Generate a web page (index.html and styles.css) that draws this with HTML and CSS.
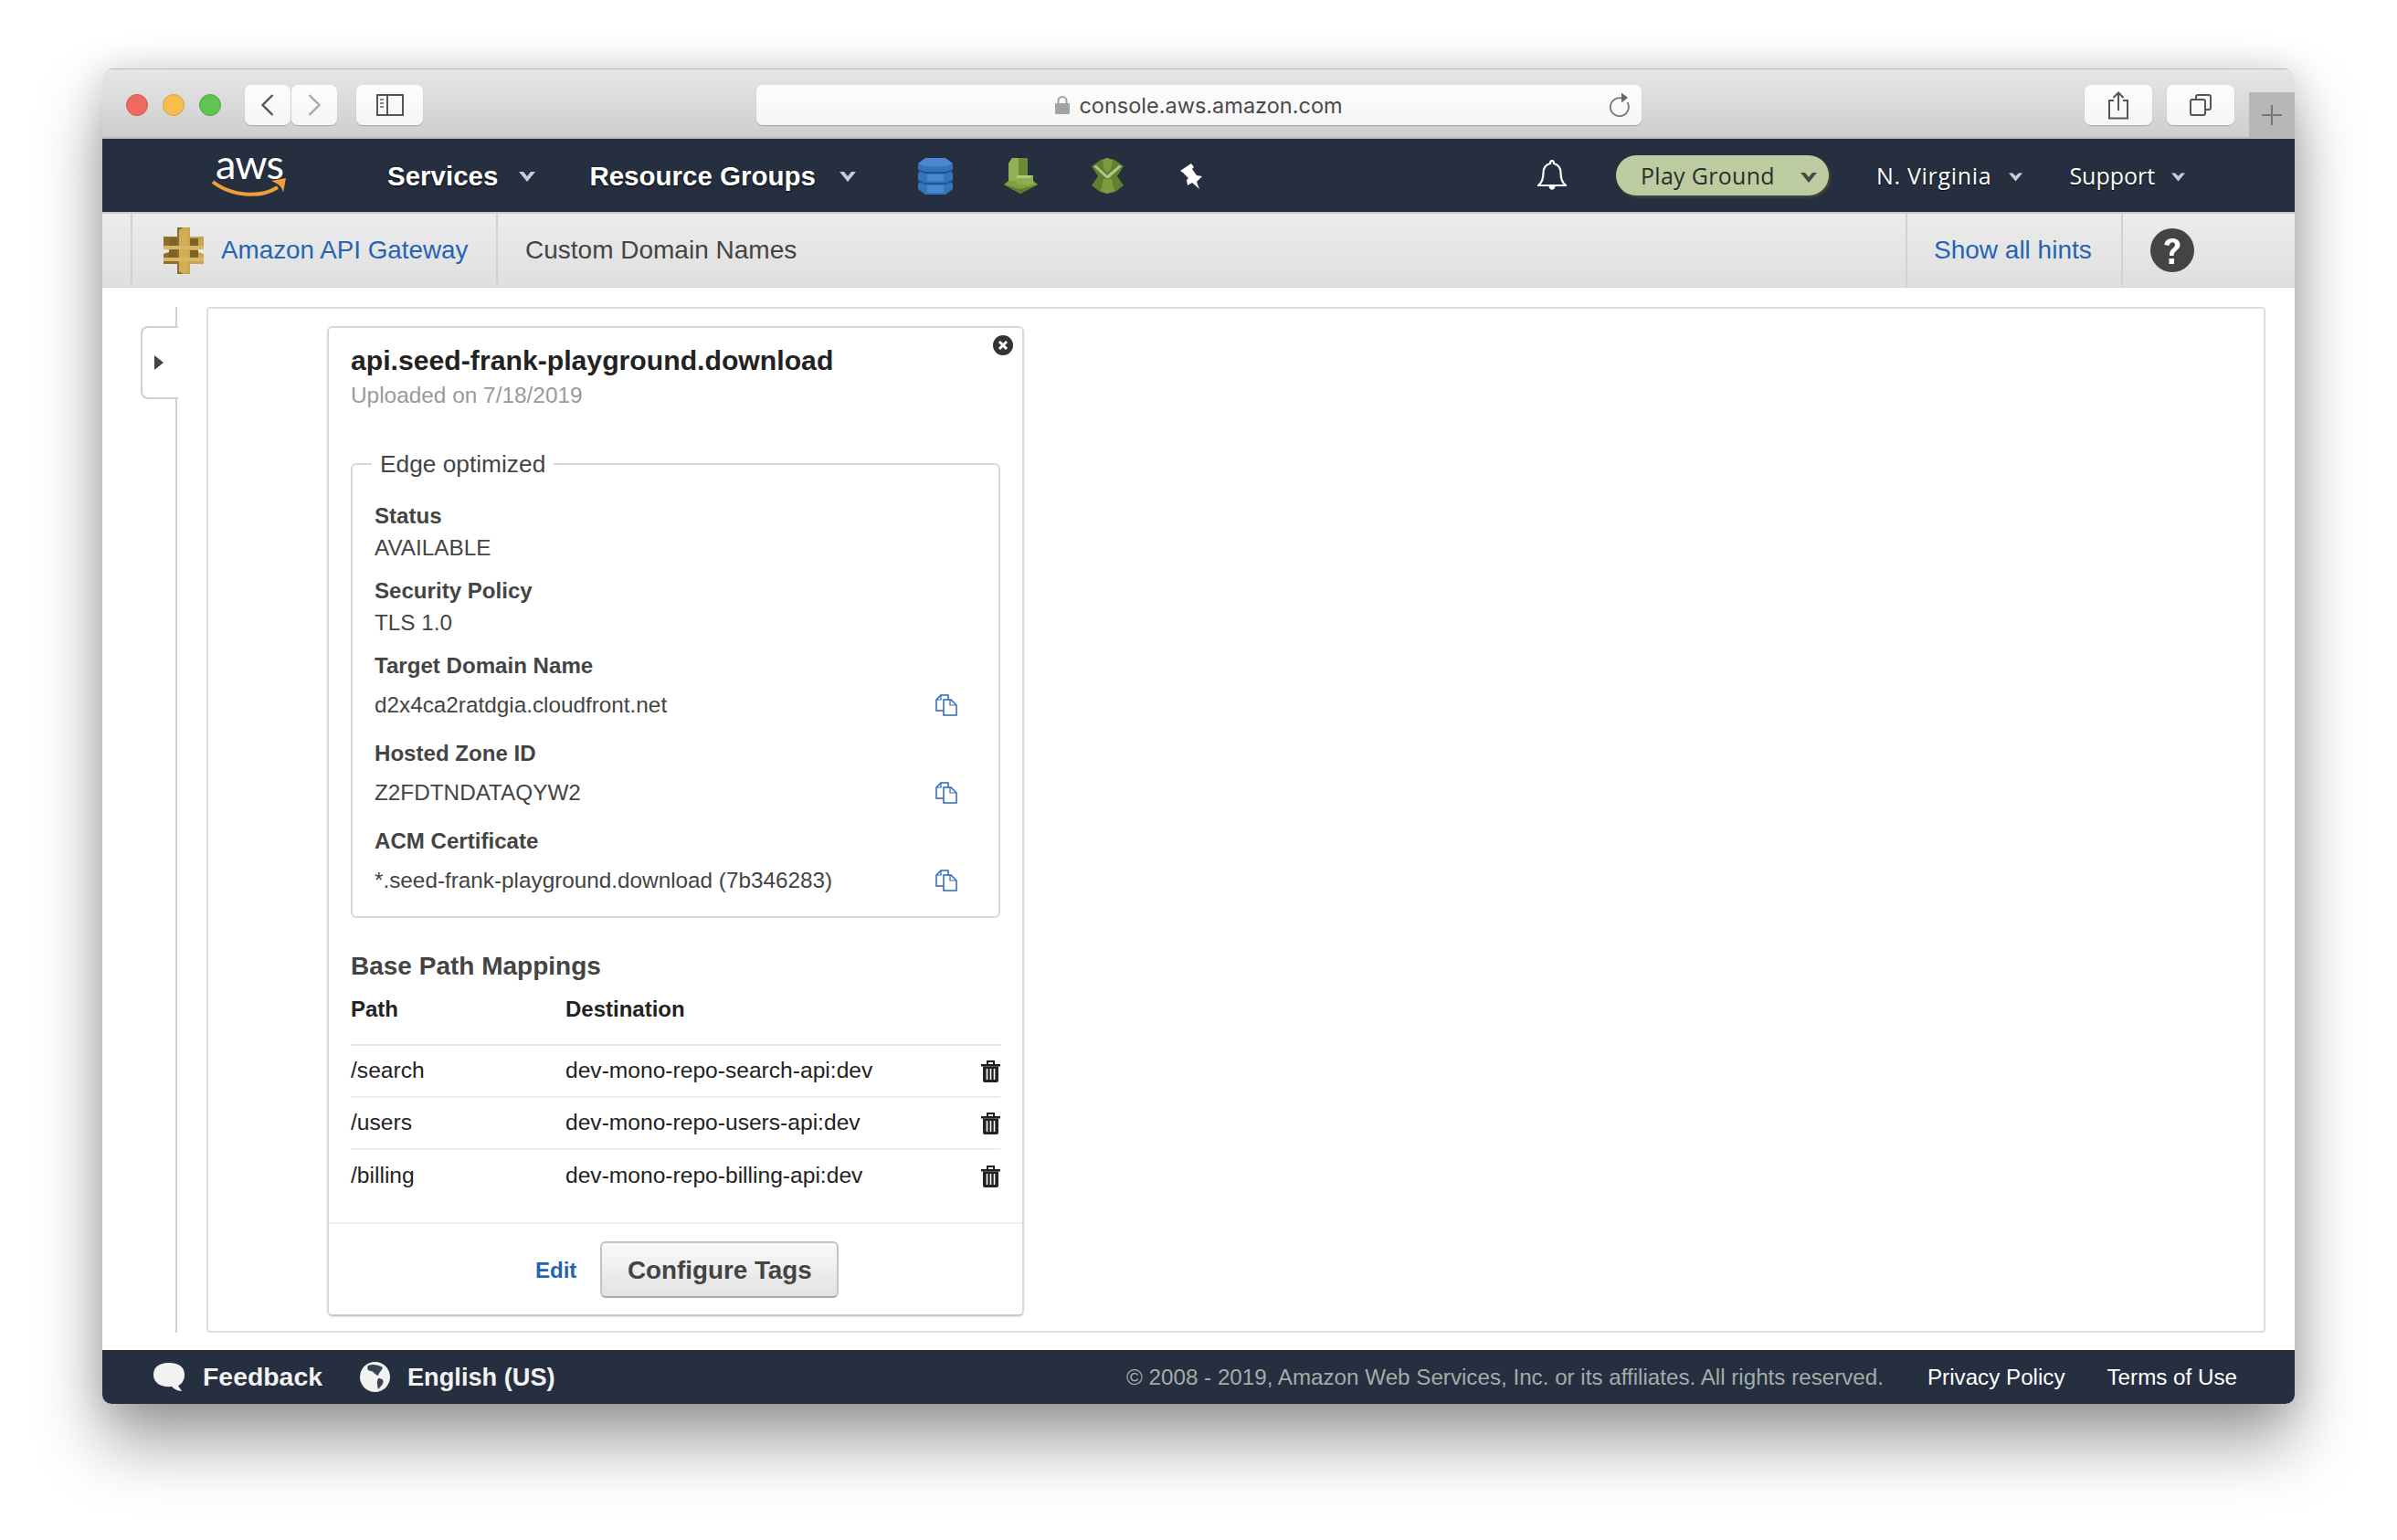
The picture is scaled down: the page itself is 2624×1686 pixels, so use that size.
FILE: index.html
```html
<!DOCTYPE html>
<html lang="en">
<head>
  <meta charset="UTF-8" />
  <title>Custom Domain Names - Amazon API Gateway</title>
  <link rel="stylesheet" href="styles.css">
</head>
<body>
<div class="window">

  <!-- safari toolbar -->
  <div class="toolbar">
    <span class="light red"></span>
    <span class="light yellow"></span>
    <span class="light green"></span>
    <div class="tbtn back">
      <svg width="14" height="24" viewBox="0 0 14 24"><path d="M12.5 1 L1.5 12 L12.5 23" fill="none" stroke="#555" stroke-width="2.4"/></svg>
    </div>
    <div class="tbtn forward">
      <svg width="14" height="24" viewBox="0 0 14 24"><path d="M1.5 1 L12.5 12 L1.5 23" fill="none" stroke="#a8a8a8" stroke-width="2.4"/></svg>
    </div>
    <div class="tbtn side">
      <svg width="30" height="24" viewBox="0 0 30 24"><rect x="1" y="1" width="28" height="22" fill="none" stroke="#555" stroke-width="2"/><path d="M12 1 V23" stroke="#555" stroke-width="2"/><path d="M4 6 H8 M4 10 H8 M4 14 H8" stroke="#888" stroke-width="2"/></svg>
    </div>
    <div class="url">
      <svg class="lock" width="16" height="20" viewBox="0 0 16 20"><rect x="0" y="8" width="16" height="12" rx="1" fill="#a3a3a3"/><path d="M3.5 9 V5.5 a4.5 4.5 0 0 1 9 0 V9" fill="none" stroke="#a3a3a3" stroke-width="2"/></svg>
      <span class="url-text">console.aws.amazon.com</span>
      <svg class="reload" width="24" height="27" viewBox="0 0 24 27"><path d="M15 6.6 A10 10 0 1 0 20.5 11" fill="none" stroke="#777" stroke-width="1.8"/><path d="M14 0.5 L21 6 L14 11.5 Z" fill="#666"/></svg>
    </div>
    <div class="tbtn wide share-btn">
      <svg width="24" height="31" viewBox="0 0 24 31"><path d="M7 10 H2 V29.5 H22 V10 H17" fill="none" stroke="#555" stroke-width="2"/><path d="M12 21 V2 M6.5 7 L12 1.5 L17.5 7" fill="none" stroke="#555" stroke-width="2"/></svg>
    </div>
    <div class="tbtn wide tabs-btn">
      <svg width="24" height="24" viewBox="0 0 24 24"><rect x="1" y="6" width="16" height="17" rx="2" fill="none" stroke="#555" stroke-width="2"/><path d="M7 5 V3 a2 2 0 0 1 2 -2 H21 a2 2 0 0 1 2 2 V15 a2 2 0 0 1 -2 2 H18" fill="none" stroke="#555" stroke-width="2"/></svg>
    </div>
    <div class="newtab">
      <svg width="22" height="22" viewBox="0 0 22 22"><path d="M11 0 V22 M0 11 H22" stroke="#777" stroke-width="2"/></svg>
    </div>
  </div>

  <!-- aws nav -->
  <nav class="nav">
    <a class="logo">
      <span class="logo-text">aws</span>
      <svg class="smile" width="82" height="22" viewBox="0 0 82 22"><path d="M1 4 C20 19 52 23 72 10" fill="none" stroke="#f29d38" stroke-width="4"/><path d="M65 3 L81 0 L78 16 C77 9 72 6 65 3 Z" fill="#f29d38"/></svg>
    </a>
    <a class="nav-main services">Services</a>
    <svg class="caret caret-services" width="18" height="11" viewBox="0 0 18 11"><path d="M0 0 H5 L9 5 L13 0 H18 L9 11 Z" fill="#ccc"/></svg>
    <a class="nav-main groups">Resource Groups</a>
    <svg class="caret caret-groups" width="18" height="11" viewBox="0 0 18 11"><path d="M0 0 H5 L9 5 L13 0 H18 L9 11 Z" fill="#ccc"/></svg>

    <svg class="shortcut first" width="38" height="40" viewBox="0 0 38 40">
      <path d="M8 0 H30 L38 6 V12 L35 14 L38 16 V24 L35 26 L38 28 V34 L30 40 H8 L0 34 V28 L3 26 L0 24 V16 L3 14 L0 12 V6 Z" fill="#3574bd"/>
      <path d="M0 12 L8 15 H30 L38 12 V14 L30 17 H8 L0 14 Z M0 24 L8 27 H30 L38 24 V26 L30 29 H8 L0 26 Z" fill="#245391"/>
      <path d="M8 0 H30 L38 6 L30 9 H8 L0 6 Z M10 18 H28 V25 H10 Z M10 30 H28 V38 H10 Z" fill="#4a87cf"/>
    </svg>
    <svg class="shortcut second" width="37" height="39" viewBox="0 0 37 39">
      <path d="M0 29 L5 25 H32 L37 29 L18 39 Z" fill="#80a042"/>
      <path d="M5 6 L9 0 H26 V24 H5 Z" fill="#6c8b35"/>
      <path d="M5 6 L9 0 H16 V25 H5 Z" fill="#93b153"/>
      <path d="M14 19 H32 V29 H14 Z" fill="#8ead4e"/>
      <path d="M14 19 H32 L28 22 H14 Z" fill="#b0c97a"/>
      <path d="M0 29 L18 34 L37 29 L18 39 Z" fill="#5f7d2e"/>
    </svg>
    <svg class="shortcut third" width="35" height="39" viewBox="0 0 35 39">
      <path d="M10 2 L17 0 L25 2 L35 9 L28 20 L35 30 L26 37 L17 39 L9 37 L0 30 L7 20 L0 9 Z" fill="#627f30"/>
      <path d="M12 2 L17 0 L23 2 L21 13 L17 16 L14 13 Z" fill="#7c9b40"/>
      <path d="M13 23 H22 L25 36 L17 39 L10 36 Z" fill="#7c9b40"/>
      <path d="M2 9 L5 8 L17 19 L30 8 L33 9 L19 22 H16 Z" fill="#b4c590"/>
    </svg>
    <svg class="shortcut fourth" width="25" height="28" viewBox="0 0 25 28">
      <path d="M0 8 L12 0 L15 4 L13 6 L18 13 L24 14 L18 20 L21 28 L13 21 L8 24 L7 18 L9 16 L3 10 Z" fill="#fff"/>
    </svg>

    <svg class="bell" width="32" height="35" viewBox="0 0 32 35"><path d="M16 1 C17.500 1 18 2.500 18 4 C23 5.500 25.500 9 25.500 14 C25.500 21 27 25 31 28 H1 C5 25 6.500 21 6.500 14 C6.500 9 9 5.500 14 4 C14 2.500 14.500 1 16 1 Z" fill="none" stroke="#fff" stroke-width="2.2"/><path d="M12.500 29 C13 34 19 34 19.500 29 Z" fill="#fff"/></svg>

    <div class="env">
      <span class="env-name">Play Ground</span>
      <svg width="18" height="11" viewBox="0 0 18 11"><path d="M0 0 H5 L9 5 L13 0 H18 L9 11 Z" fill="#454a3c"/></svg>
    </div>
    <a class="nav-light region">N. Virginia</a>
    <svg class="caret caret-region" width="15" height="10" viewBox="0 0 18 11"><path d="M0 0 H5 L9 4 L13 0 H18 L9 11 Z" fill="#ccc"/></svg>
    <a class="nav-light support">Support</a>
    <svg class="caret caret-support" width="15" height="10" viewBox="0 0 18 11"><path d="M0 0 H5 L9 4 L13 0 H18 L9 11 Z" fill="#ccc"/></svg>
  </nav>

  <!-- service bar -->
  <div class="subbar">
    <div class="service">
      <svg width="44" height="51" viewBox="0 0 44 51">
        <path d="M0 10 H15 V0 L22 0 L22 51 L15 51 V40 H0 V29 L6 27 V23 L0 21 Z" fill="#8d6f2e"/>
        <path d="M44 10 H29 V0 L22 0 V51 L29 51 V40 H44 V29 L38 27 V23 L44 21 Z" fill="#c9a552"/>
        <path d="M17 3 L22 0 L27 3 V48 L22 51 L17 48 Z" fill="#d2ad58"/>
        <path d="M0 20 H44 V24 H0 Z M0 33 H44 V37 H0 Z" fill="#d8b664"/>
        <path d="M6 12 H15 V20 H6 Z M6 25 H15 V33 H6 Z M29 12 H38 V20 H29 Z M29 25 H38 V33 H29 Z" fill="#7d6226"/>
      </svg>
      <a class="link service-name">Amazon API Gateway</a>
    </div>
    <div class="crumb">Custom Domain Names</div>
    <a class="link hints">Show all hints</a>
    <div class="help">
      <svg width="48" height="48" viewBox="0 0 48 48"><circle cx="24" cy="24" r="24" fill="#444"/><path d="M15.500 18 C15.500 9 32.500 8.500 32.500 18 C32.500 24 25.500 24 25.500 30 H21 C20.500 22 27 22 27 18 C27 14 21 14.500 20.500 19 Z" fill="#fff"/><rect x="20.500" y="33" width="5.500" height="6" fill="#fff"/></svg>
    </div>
  </div>

  <!-- main -->
  <div class="content">
    <div class="sidebar">
      <div class="side-tab"><span class="side-arrow"></span></div>
    </div>
    <div class="panel">
      <div class="card">
        <svg class="close" width="22" height="22" viewBox="0 0 22 22"><circle cx="11" cy="11" r="11" fill="#333"/><path d="M7 7 L15 15 M15 7 L7 15" stroke="#fff" stroke-width="3"/></svg>
        <h2 class="domain">api.seed-frank-playground.download</h2>
        <div class="uploaded">Uploaded on 7/18/2019</div>

        <fieldset class="edge">
          <legend>Edge optimized</legend>
          <div class="field">
            <div class="label">Status</div>
            <div class="value">AVAILABLE</div>
          </div>
          <div class="field">
            <div class="label">Security Policy</div>
            <div class="value">TLS 1.0</div>
          </div>
          <div class="field">
            <div class="label">Target Domain Name</div>
            <div class="value copyable">d2x4ca2ratdgia.cloudfront.net
              <svg class="copy" width="24" height="24" viewBox="0 0 24 24"><path d="M9 18 H1 V6 L6 1 H14 V6" fill="none" stroke="#2a68b8" stroke-width="1.500"/><path d="M9 6 H17 L23 12 V23 H9 Z" fill="#fff" stroke="#2a68b8" stroke-width="1.500"/><path d="M6 1 V6 H1 M16 6 V12 H23" fill="none" stroke="#2a68b8" stroke-width="1.200"/></svg>
            </div>
          </div>
          <div class="field">
            <div class="label">Hosted Zone ID</div>
            <div class="value copyable">Z2FDTNDATAQYW2
              <svg class="copy" width="24" height="24" viewBox="0 0 24 24"><path d="M9 18 H1 V6 L6 1 H14 V6" fill="none" stroke="#2a68b8" stroke-width="1.500"/><path d="M9 6 H17 L23 12 V23 H9 Z" fill="#fff" stroke="#2a68b8" stroke-width="1.500"/><path d="M6 1 V6 H1 M16 6 V12 H23" fill="none" stroke="#2a68b8" stroke-width="1.200"/></svg>
            </div>
          </div>
          <div class="field last">
            <div class="label">ACM Certificate</div>
            <div class="value copyable">*.seed-frank-playground.download (7b346283)
              <svg class="copy" width="24" height="24" viewBox="0 0 24 24"><path d="M9 18 H1 V6 L6 1 H14 V6" fill="none" stroke="#2a68b8" stroke-width="1.500"/><path d="M9 6 H17 L23 12 V23 H9 Z" fill="#fff" stroke="#2a68b8" stroke-width="1.500"/><path d="M6 1 V6 H1 M16 6 V12 H23" fill="none" stroke="#2a68b8" stroke-width="1.200"/></svg>
            </div>
          </div>
        </fieldset>

        <h3 class="mappings-title">Base Path Mappings</h3>
        <div class="map-head">
          <span>Path</span>
          <span>Destination</span>
        </div>
        <div class="map-row">
          <span>/search</span>
          <span>dev-mono-repo-search-api:dev</span>
          <svg class="trash" width="21" height="24" viewBox="0 0 21 24"><path d="M0 4 H21 V6.500 H0 Z" fill="#222"/><path d="M7 4 V1 H14 V4" fill="none" stroke="#222" stroke-width="2"/><path d="M2 6.500 H19 V22 a2 2 0 0 1 -2 2 H4 a2 2 0 0 1 -2 -2 Z" fill="#222"/><path d="M6.500 9 V21 M10.500 9 V21 M14.500 9 V21" stroke="#fff" stroke-width="1.600"/></svg>
        </div>
        <div class="map-row">
          <span>/users</span>
          <span>dev-mono-repo-users-api:dev</span>
          <svg class="trash" width="21" height="24" viewBox="0 0 21 24"><path d="M0 4 H21 V6.500 H0 Z" fill="#222"/><path d="M7 4 V1 H14 V4" fill="none" stroke="#222" stroke-width="2"/><path d="M2 6.500 H19 V22 a2 2 0 0 1 -2 2 H4 a2 2 0 0 1 -2 -2 Z" fill="#222"/><path d="M6.500 9 V21 M10.500 9 V21 M14.500 9 V21" stroke="#fff" stroke-width="1.600"/></svg>
        </div>
        <div class="map-row last">
          <span>/billing</span>
          <span>dev-mono-repo-billing-api:dev</span>
          <svg class="trash" width="21" height="24" viewBox="0 0 21 24"><path d="M0 4 H21 V6.500 H0 Z" fill="#222"/><path d="M7 4 V1 H14 V4" fill="none" stroke="#222" stroke-width="2"/><path d="M2 6.500 H19 V22 a2 2 0 0 1 -2 2 H4 a2 2 0 0 1 -2 -2 Z" fill="#222"/><path d="M6.500 9 V21 M10.500 9 V21 M14.500 9 V21" stroke="#fff" stroke-width="1.600"/></svg>
        </div>

        <div class="card-foot">
          <a class="link edit">Edit</a>
          <button class="tags">Configure Tags</button>
        </div>
      </div>
    </div>
  </div>

  <!-- footer -->
  <footer class="foot">
    <svg class="foot-icon" width="34" height="32" viewBox="0 0 34 32"><path d="M17 0 C28 0 34 5 34 13 C34 20 30 24 27 25 L31 31 C26 31 22 28 20 26 C8 27 0 22 0 13 C0 5 6 0 17 0 Z" fill="#f2f2f2"/></svg>
    <a class="foot-main feedback">Feedback</a>
    <svg class="foot-icon globe" width="33" height="33" viewBox="0 0 33 33"><circle cx="16.500" cy="16.500" r="16.500" fill="#f2f2f2"/><path d="M9 4 C13 2 20 3 25 6 C24 10 21 11 20 15 C16 14 15 10 12 10 C9 10 7 7 9 4 Z M20 18 C24 18 27 20 25 24 C23 27 21 29 20 30 C19 26 18 22 20 18 Z" fill="#3a4554"/></svg>
    <a class="foot-main language">English (US)</a>
    <span class="copyright">© 2008 - 2019, Amazon Web Services, Inc. or its affiliates. All rights reserved.</span>
    <a class="foot-link privacy">Privacy Policy</a>
    <a class="foot-link terms">Terms of Use</a>
  </footer>
</div>
</body>
</html>
```

FILE: styles.css
```css
* {
  box-sizing: border-box;
}
html,
body {
  height: 1686px;
}
body {
  margin: 0;
  padding: 75px 112px 0;
  background: #fff;
  font-family: "Liberation Sans", Arial, sans-serif;
  color: #444;
  overflow: hidden;
}
a {
  cursor: pointer;
}
.window {
  width: 2400px;
  height: 1462px;
  display: flex;
  flex-direction: column;
  border-radius: 10px;
  overflow: hidden;
  box-shadow: 0 42px 72px rgba(0, 0, 0, 0.38), 0 0 40px rgba(0, 0, 0, 0.14);
}

/* toolbar */
.toolbar {
  height: 77px;
  flex: none;
  display: flex;
  align-items: flex-start;
  padding-top: 17px;
  background: linear-gradient(#e6e6e6, #cecece);
  border-top: 1px solid #bdbdbd;
  border-bottom: 2px solid #b9b9b9;
}
.light {
  width: 24px;
  height: 24px;
  border-radius: 50%;
  margin-top: 10px;
  margin-right: 16px;
}
.red {
  margin-left: 26px;
  background: #ee6a5f;
  border: 1px solid #d5534a;
}
.yellow {
  background: #f6bd4f;
  border: 1px solid #dc9f35;
}
.green {
  background: #5fc453;
  border: 1px solid #4aa63e;
  margin-right: 26px;
}
.tbtn {
  width: 50px;
  height: 44px;
  display: flex;
  align-items: center;
  justify-content: center;
  background: linear-gradient(#fdfdfd, #f5f5f5);
  border-radius: 7px;
  box-shadow: 0 1px 1px #a6a6a6;
}
.forward {
  margin-left: 1px;
}
.side {
  width: 73px;
  margin-left: 21px;
}
.url {
  width: 969px;
  height: 44px;
  margin-left: 365px;
  display: flex;
  align-items: center;
  justify-content: center;
  position: relative;
  background: linear-gradient(#fdfdfd, #f5f5f5);
  border-radius: 7px;
  box-shadow: 0 1px 1px #a0a0a0;
}
.lock {
  margin-right: 10px;
}
.url-text {
  font-family: Inter, "Liberation Sans", sans-serif;
  font-size: 23.5px;
  color: #4a4a4a;
}
.reload {
  position: absolute;
  right: 12px;
  top: 8px;
}
.wide {
  width: 74px;
}
.share-btn {
  margin-left: 485px;
}
.tabs-btn {
  margin-left: 16px;
}
.newtab {
  width: 50px;
  height: 49px;
  margin-left: 16px;
  margin-top: 8px;
  display: flex;
  align-items: center;
  justify-content: center;
  background: #b7b7b7;
}

/* nav */
.nav {
  height: 80px;
  flex: none;
  display: flex;
  align-items: center;
  background: #262f3f;
  color: #fff;
  white-space: nowrap;
}
.logo {
  width: 82px;
  margin-left: 120px;
  display: flex;
  flex-direction: column;
  align-items: center;
}
.logo-text {
  font-family: Lato, "Open Sans", sans-serif;
  font-size: 45px;
  line-height: 32px;
  letter-spacing: -1px;
  margin-top: -4px;
}
.smile {
  margin-top: 0;
}
.nav-main {
  font-weight: bold;
  font-size: 29.5px;
  margin-top: 2px;
  text-shadow: 0 1px 2px #000;
}
.services {
  margin-left: 110px;
}
.caret {
  flex: none;
  margin-top: 3px;
}
.caret-services {
  margin-left: 23px;
}
.groups {
  margin-left: 59px;
}
.caret-groups {
  margin-left: 26px;
}
.shortcut {
  flex: none;
  margin-top: 1px;
}
.first {
  margin-left: 68px;
}
.second {
  margin-left: 56px;
}
.third {
  margin-left: 59px;
}
.fourth {
  margin-left: 62px;
}
.bell {
  margin-left: 366px;
  flex: none;
}
.env {
  width: 233px;
  height: 44px;
  margin-left: 54px;
  display: flex;
  align-items: center;
  padding-left: 27px;
  background: #bccba0;
  border-radius: 22px;
  box-shadow: 2px 2px 3px rgba(90, 80, 60, 0.7);
  color: #2b2f2b;
}
.env-name {
  font-family: "Open Sans", sans-serif;
  font-size: 25px;
  letter-spacing: 0.3px;
  width: 175px;
}
.env svg {
  margin-top: 4px;
}
.nav-light {
  font-family: "Open Sans", sans-serif;
  font-size: 25px;
  text-shadow: 0 1px 1px #000;
}
.region {
  margin-left: 52px;
  letter-spacing: 0.7px;
}
.caret-region {
  margin-left: 19px;
}
.support {
  margin-left: 51px;
}
.caret-support {
  margin-left: 18px;
}

/* service bar */
.subbar {
  height: 83px;
  flex: none;
  display: flex;
  background: linear-gradient(#ececec, #dfdfdf);
  border-top: 2px solid #c9c9c9;
  border-bottom: 1px solid #d4d4d4;
  font-size: 28px;
}
.service {
  margin-left: 31px;
  width: 402px;
  display: flex;
  align-items: center;
  padding-left: 34px;
  border-left: 2px solid #d2d2d2;
  border-right: 2px solid #d2d2d2;
}
.service svg {
  margin-right: 19px;
  flex: none;
}
.service-name {
  font-size: 27.8px;
}
.link {
  color: #2563b4;
}
.crumb {
  display: flex;
  align-items: center;
  padding-left: 30px;
  width: 1541px;
  color: #444;
}
.hints {
  width: 238px;
  display: flex;
  align-items: center;
  padding-left: 29px;
  border-left: 2px solid #d2d2d2;
  border-right: 2px solid #d2d2d2;
}
.help {
  display: flex;
  align-items: center;
  padding-left: 30px;
}

/* main */
.content {
  flex: 1;
  display: flex;
  padding: 21px 32px 19px 42px;
  background: #fff;
  gap: 32px;
}
.sidebar {
  width: 40px;
  flex: none;
  border-right: 2px solid #cfcfcf;
}
.side-tab {
  width: 41px;
  height: 80px;
  margin-top: 21px;
  display: flex;
  align-items: center;
  padding-left: 13px;
  background: #fff;
  border: 2px solid #cfcfcf;
  border-right: none;
  border-radius: 8px 0 0 8px;
}
.side-arrow {
  width: 0;
  height: 0;
  border-top: 8px solid transparent;
  border-bottom: 8px solid transparent;
  border-left: 10px solid #444;
}
.panel {
  flex: 1;
  padding: 19px 0 0 130px;
  border: 2px solid #dedede;
  border-radius: 4px;
}
.card {
  width: 763px;
  height: 1084px;
  display: flex;
  flex-direction: column;
  position: relative;
  padding: 16px 24px 0;
  border: 2px solid #d8d8d8;
  border-bottom-color: #c8c8c8;
  border-radius: 6px;
  box-shadow: 0 1px 2px rgba(0, 0, 0, 0.1);
}
.close {
  position: absolute;
  right: 10px;
  top: 8px;
}
.domain {
  margin: 0;
  font-size: 30.2px;
  line-height: 40px;
  color: #222;
}
.uploaded {
  margin-top: 2px;
  font-size: 24.4px;
  line-height: 32px;
  color: #9a9a9a;
}
.edge {
  margin: 41px 0 0;
  padding: 21px 24px 15px;
  width: 711px;
  border: 2px solid #d8d8d8;
  border-radius: 6px;
  min-width: 0;
}
.edge legend {
  margin-left: -3px;
  padding: 0 9px;
  font-size: 26.3px;
  line-height: 36px;
}
.field {
  margin-bottom: 11px;
}
.field.last {
  margin-bottom: 0;
}
.label {
  font-size: 24.1px;
  font-weight: bold;
  line-height: 35px;
}
.value {
  font-size: 24.3px;
  line-height: 36px;
}
.copyable {
  display: flex;
  justify-content: space-between;
  align-items: center;
  padding: 8px 21px 6px 0;
}
.copy {
  flex: none;
}
.mappings-title {
  margin: 33px 0 0;
  font-size: 28px;
  line-height: 40px;
}
.map-head {
  display: grid;
  grid-template-columns: 235px 1fr;
  margin-top: 12px;
  padding-bottom: 23px;
  border-bottom: 2px solid #e6e6e6;
  font-size: 24px;
  font-weight: bold;
  line-height: 30px;
  color: #222;
}
.map-row {
  height: 57px;
  display: grid;
  grid-template-columns: 235px 1fr 21px;
  align-items: center;
  padding-bottom: 2px;
  border-bottom: 2px solid #eee;
  font-size: 24.6px;
  color: #222;
}
.map-row.last {
  border-bottom: none;
}
.trash {
  margin-top: 2px;
}
.card-foot {
  flex: none;
  height: 101px;
  margin: auto -24px 0;
  display: flex;
  align-items: flex-start;
  padding: 19px 0 0 226px;
  border-top: 2px solid #f0f0f0;
}
.edit {
  font-size: 24px;
  font-weight: bold;
  line-height: 64px;
  margin-right: 26px;
}
.tags {
  width: 261px;
  height: 62px;
  padding: 2px 0 0;
  font-family: inherit;
  font-size: 27.8px;
  font-weight: bold;
  color: #444;
  background: linear-gradient(#fafafa, #e2e2e2);
  border: 2px solid #c4c4c4;
  border-bottom-color: #aaa;
  border-radius: 6px;
}

/* footer */
.foot {
  height: 59px;
  flex: none;
  display: flex;
  align-items: center;
  padding-right: 63px;
  background: #262f3f;
  color: #f2f2f2;
  white-space: nowrap;
}
.foot-icon {
  margin-left: 56px;
  flex: none;
}
.foot-main {
  font-size: 28.4px;
  font-weight: bold;
  margin-left: 20px;
}
.foot-icon.globe {
  margin-left: 41px;
}
.language {
  font-size: 27.2px;
  margin-left: 19px;
}
.copyright {
  margin-left: auto;
  font-size: 24.2px;
  color: #a3aca9;
}
.foot-link {
  font-size: 24.2px;
  color: #fff;
}
.privacy {
  margin-left: 48px;
}
.terms {
  margin-left: 46px;
}
```
